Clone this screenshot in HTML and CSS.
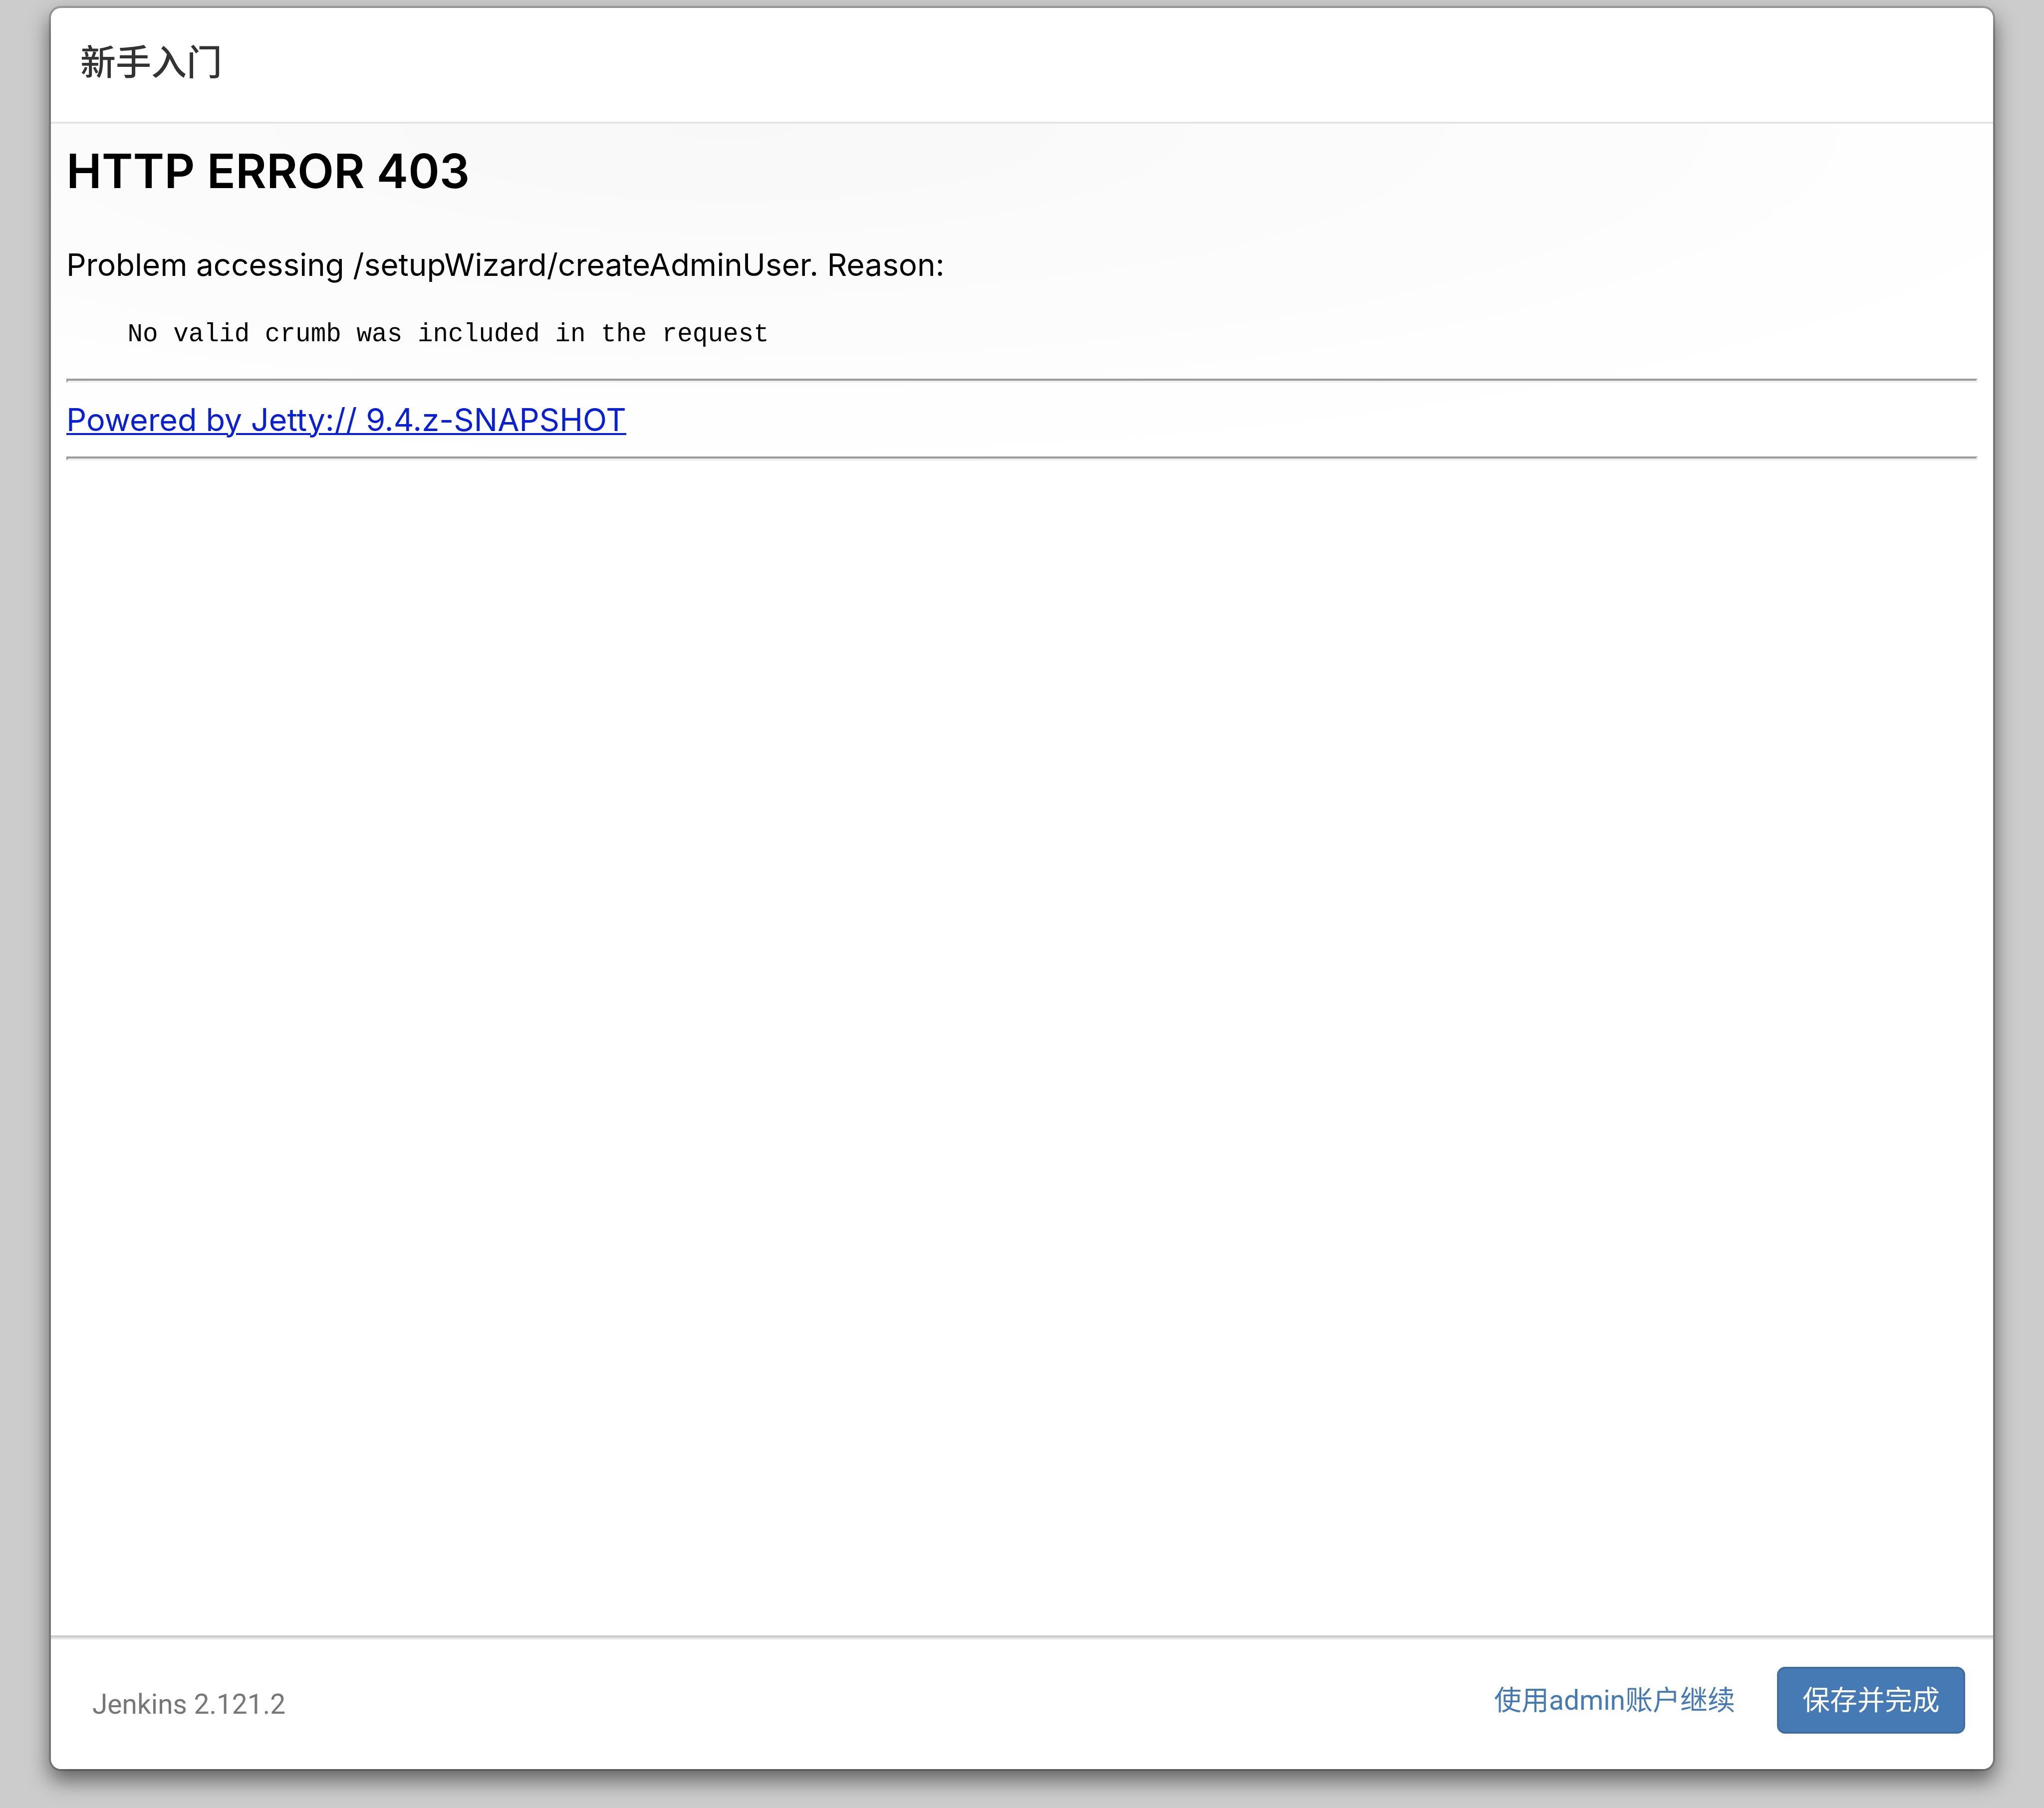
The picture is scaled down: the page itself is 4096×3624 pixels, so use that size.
FILE: index.html
```html
<!DOCTYPE html>
<html lang="zh-CN">
<head>
<meta charset="utf-8">
<meta name="viewport" content="width=device-width, initial-scale=1">
<title>新手入门 - Jenkins</title>
<link rel="stylesheet" href="styles.css">
</head>
<body>
<div class="modal" role="dialog" aria-labelledby="wizard-title">
  <header class="modal-header">
    <h4 class="modal-title" id="wizard-title">新手入门</h4>
  </header>
  <main class="modal-body">
    <h2 class="error-title">HTTP ERROR 403</h2>
    <p class="error-text">Problem accessing /setupWizard/createAdminUser. Reason:</p>
    <pre class="error-reason">    No valid crumb was included in the request</pre>
    <hr class="rule">
    <a class="jetty-link" href="#">Powered by Jetty:// 9.4.z-SNAPSHOT</a>
    <hr class="rule">
  </main>
  <footer class="modal-footer">
    <span class="version">Jenkins 2.121.2</span>
    <div class="actions">
      <button type="button" class="btn btn-link">使用admin账户继续</button>
      <button type="button" class="btn btn-primary">保存并完成</button>
    </div>
  </footer>
</div>
</body>
</html>
```
FILE: styles.css
```css
* {
  box-sizing: border-box;
}

body {
  display: flex;
  min-height: 100vh;
  margin: 0;
  padding: 16px 102px 78px;
  background: #ccc;
  color: #333;
  font-family: Roboto, "Noto Sans CJK SC", sans-serif;
}

.modal {
  display: flex;
  flex: 1;
  flex-direction: column;
  min-width: 0;
  border-radius: 20px;
  background: #fff;
  box-shadow: 0 0 0 4px rgba(0, 0, 0, 0.2), 0 20px 40px 4px rgba(0, 0, 0, 0.5);
}

.modal-header {
  padding: 58px 59px 66px;
  border-bottom: 4px solid #e5e5e5;
}

.modal-title {
  margin: 0;
  font-size: 71px;
  font-weight: 500;
  line-height: 104px;
}

.modal-body {
  flex: 1;
  padding: 31px;
  background: radial-gradient(ellipse 75% 700px at 35% 0, #f8f8f8, #fff);
  color: #000;
  font-family: Inter, "Noto Sans CJK SC", sans-serif;
  font-size: 63px;
  line-height: 88px;
}

.error-title {
  margin: 0 0 80px;
  font-size: 95px;
  font-weight: 600;
  line-height: 128px;
}

.error-text {
  margin: 0 0 66px;
  font-size: 62px;
}

.error-reason {
  margin: 0 0 58px;
  font-family: "Liberation Mono", monospace;
  font-size: 51px;
  line-height: 60px;
}

.rule {
  margin: 0;
  border: 4px solid;
  border-color: #9a9a9a #eee #eee #9a9a9a;
}

.jetty-link {
  display: block;
  width: fit-content;
  margin: 30px 0;
  color: #0a20d8;
  text-decoration-thickness: 4px;
  text-underline-offset: 4px;
}

.modal-footer {
  display: flex;
  align-items: center;
  justify-content: space-between;
  padding: 59px 56px 71px 83px;
  border-top: 4px solid #ccc;
  box-shadow: inset 0 4px #e5e5e5;
  font-size: 55px;
}

.version {
  padding-top: 16px;
  color: #777;
  line-height: 80px;
}

.actions {
  display: flex;
  gap: 33px;
}

.btn {
  padding: 23px 47px;
  border: 4px solid transparent;
  border-radius: 16px;
  background: none;
  font-family: inherit;
  font-size: 55px;
  line-height: 80px;
}

.btn-link {
  color: #467ab4;
}

.btn-primary {
  border-color: #3f6ea2;
  background: #467ab4;
  color: #fff;
}
```
